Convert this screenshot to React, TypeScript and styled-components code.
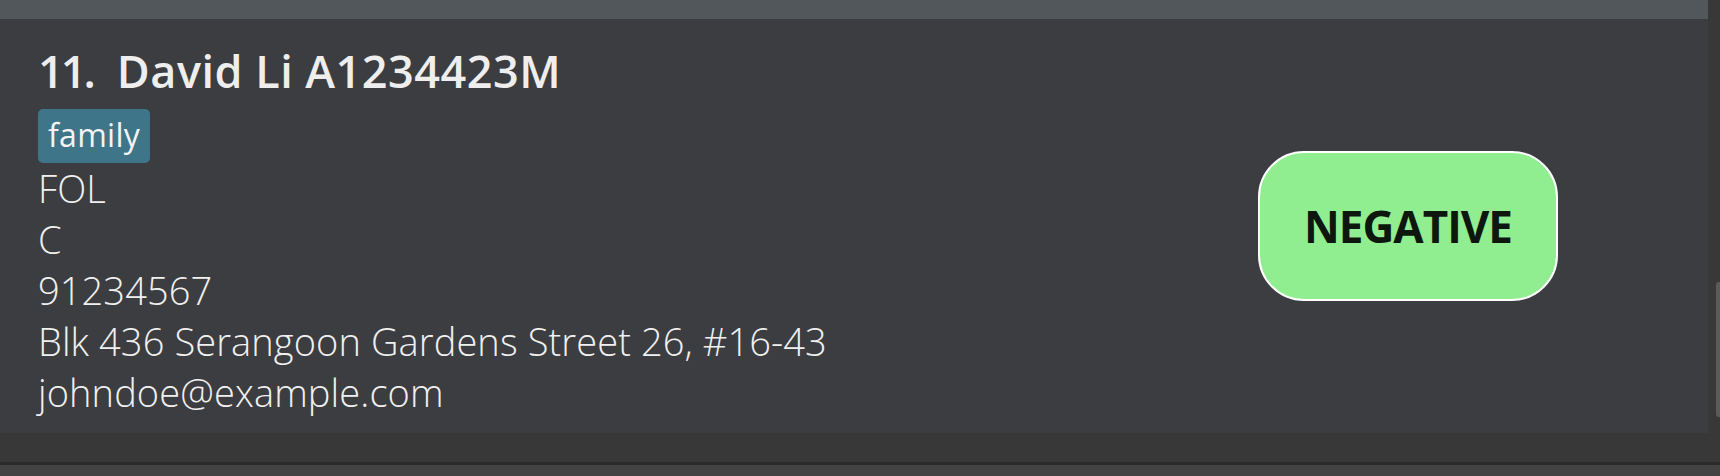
import React from "react"
import styled, { createGlobalStyle } from "styled-components"

const GlobalStyle = createGlobalStyle`
    html, body {
        margin: 0;
        padding: 0;
        background: #383838;
    }
    * {
        box-sizing: border-box;
    }
`

const Window = styled.div`
    width: 1720px;
    height: 476px;
    display: flex;
    flex-direction: column;
    background-color: #383838;
    overflow: hidden;
    font-family: 'Open Sans', 'Noto Sans', sans-serif;
`

const ListArea = styled.div`
    height: 462px;
    display: flex;
`

const ListColumn = styled.div`
    flex: 1;
    display: flex;
    flex-direction: column;
`

const PrevCardTail = styled.div`
    height: 19px;
    background-color: #51575a;
`

const Card = styled.div`
    height: 414px;
    background-color: #3c3d40;
    display: flex;
    align-items: center;
    padding: 0 150px 0 38px;
`

const Info = styled.div`
    flex: 1;
    display: flex;
    flex-direction: column;
    align-self: flex-start;
    padding-top: 21px;
`

const TitleRow = styled.div`
    display: flex;
    align-items: baseline;
    column-gap: 24px;
    font-size: 45px;
    font-weight: 600;
    line-height: 61px;
    color: #eeeeee;
    letter-spacing: 0.5px;
`

const Index = styled.span`
    letter-spacing: -3px;
`

const Tags = styled.div`
    display: flex;
    column-gap: 8px;
    margin-top: 8px;
`

const Tag = styled.span`
    background-color: #3e7589;
    color: #f3f3f3;
    border-radius: 5px;
    height: 54px;
    padding: 0 10px;
    font-size: 32px;
    line-height: 52px;
    letter-spacing: 0.3px;
`

const Field = styled.div`
    font-size: 38px;
    font-weight: 300;
    line-height: 51px;
    color: #f0f0f0;
    letter-spacing: 0.1px;
`

const Badge = styled.div`
    width: 300px;
    height: 150px;
    border: 2px solid #ffffff;
    border-radius: 46px;
    background-color: #90ee90;
    display: flex;
    justify-content: center;
    align-items: center;
    font-size: 44px;
    font-weight: 700;
    color: #0e170e;
    letter-spacing: -1px;
`

const ScrollTrack = styled.div`
    width: 12px;
    background-color: #383838;
    padding-top: 282px;
    display: flex;
    justify-content: flex-end;
`

const ScrollThumb = styled.div`
    width: 4px;
    height: 135px;
    background-color: #5b5b5b;
    border-radius: 3px 0 0 3px;
`

const Divider = styled.div`
    height: 3px;
    background-color: #2b2b2b;
`

const Footer = styled.div`
    flex: 1;
    background-color: #434343;
`

const person = {
    index: 11,
    name: "David Li A1234423M",
    tags: ["family"],
    fields: ["FOL", "C", "91234567", "Blk 436 Serangoon Gardens Street 26, #16-43", "johndoe@example.com"],
    status: "NEGATIVE",
}

const App: React.FC = () => {
    return (
        <Window>
            <GlobalStyle />
            <ListArea>
                <ListColumn>
                    <PrevCardTail />
                    <Card>
                        <Info>
                            <TitleRow>
                                <Index>{person.index}.</Index>
                                <span>{person.name}</span>
                            </TitleRow>
                            <Tags>
                                {person.tags.map((tag) => (
                                    <Tag key={tag}>{tag}</Tag>
                                ))}
                            </Tags>
                            {person.fields.map((field) => (
                                <Field key={field}>{field}</Field>
                            ))}
                        </Info>
                        <Badge>{person.status}</Badge>
                    </Card>
                </ListColumn>
                <ScrollTrack>
                    <ScrollThumb />
                </ScrollTrack>
            </ListArea>
            <Divider />
            <Footer />
        </Window>
    )
}

export default App
